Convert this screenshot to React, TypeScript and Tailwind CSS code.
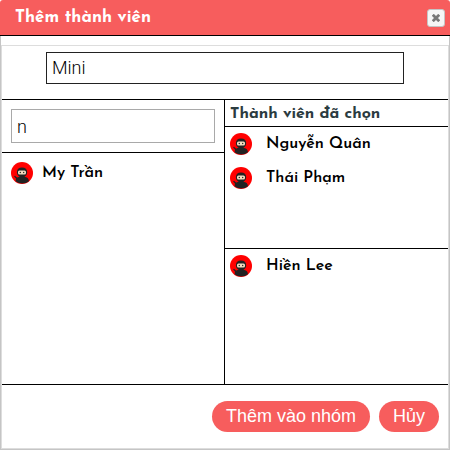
import { useState } from "react";

const nameFont = "font-['Josefin_Sans','Lato','Noto_Sans',sans-serif]";

function NinjaAvatar() {
  return (
    <svg viewBox="0 0 22 22" className="size-[22px] shrink-0" aria-hidden="true">
      <circle cx="11" cy="11" r="11" fill="#ff0000" />
      <path d="M3 14.500l1-.7 4 3.500-1 1.500z" fill="#222" />
      <path
        d="M11 5.500c3.400 0 5.200 2 5.200 4.700 0 2.200-1.200 3.800-2.900 4.600 3 .4 4.500 1.700 4.700 4.500A11 11 0 0 1 4.500 19.300c.2-2.800 1.500-4.100 4.300-4.500-1.700-.8-2.900-2.400-2.900-4.600 0-2.700 1.700-4.700 5.100-4.700z"
        fill="#222"
      />
      <rect x="7" y="8.500" width="8" height="4" rx="1.500" fill="#f3dcc0" />
      <circle cx="9.300" cy="10.500" r=".7" fill="#222" />
      <circle cx="12.700" cy="10.500" r=".7" fill="#222" />
    </svg>
  );
}

function Member({ name, gap }: { name: string; gap: string }) {
  return (
    <li className={`flex h-[34px] items-center ${gap}`}>
      <NinjaAvatar />
      <span>{name}</span>
    </li>
  );
}

export default function App() {
  const [group, setGroup] = useState("Mini");
  const [query, setQuery] = useState("n");

  return (
    <div className="bg-white pr-px">
      <div role="dialog" aria-labelledby="title" className="rounded-t-[3px] text-black">
        <header className="flex h-9 items-center justify-between rounded-t-[3px] border-b border-black bg-[#f75d5d] pr-[5px] pl-[15px]">
          <h1 id="title" className={`text-[17px] leading-6 font-bold text-white ${nameFont}`}>
            Thêm thành viên
          </h1>
          <button
            type="button"
            aria-label="Đóng"
            className="flex size-[18px] items-center justify-center rounded-[3px] border border-[#c5c5c5] bg-[#f6f6f6]"
          >
            <svg viewBox="0 0 8 8" className="size-2" aria-hidden="true">
              <path d="M.8 .8l6.400 6.400M7.200 .8L.8 7.200" stroke="#777" strokeWidth="2.800" />
            </svg>
          </button>
        </header>

        <div className="border-x border-b border-[#c5c5c5] pt-[9px]">
          <div className="border border-[#ddd]">
            <div className="px-11 pt-1.5 pb-[15px]">
              <input
                type="text"
                aria-label="Tên nhóm"
                value={group}
                onChange={(e) => setGroup(e.target.value)}
                className="block h-8 w-full border border-[#222] px-[5px] pb-0.5 font-['Roboto',sans-serif] text-lg leading-6 font-light text-black outline-none"
              />
            </div>

            <div className="grid h-[286px] grid-cols-2 border-y border-black">
              <section className="flex flex-col border-r border-black">
                <div className="border-b border-black p-[9px]">
                  <input
                    type="text"
                    aria-label="Tìm thành viên"
                    value={query}
                    onChange={(e) => setQuery(e.target.value)}
                    className="block h-[34px] w-full border border-[#a9a9a9] px-[5px] font-['Roboto',sans-serif] text-lg leading-6 font-light text-black outline-none"
                  />
                </div>
                <ul className={`px-[9px] pt-[3px] text-base font-semibold ${nameFont}`}>
                  <Member name="My Trần" gap="gap-[9px]" />
                </ul>
              </section>

              <section className={`flex flex-col text-base font-semibold ${nameFont}`}>
                <h2 className="h-[27px] border-b border-black px-[5px] leading-7 font-bold text-[#2b3b3f]">
                  Thành viên đã chọn
                </h2>
                <ul className="h-[122px] border-b border-black px-[5px]">
                  <Member name="Nguyễn Quân" gap="gap-3.5" />
                  <Member name="Thái Phạm" gap="gap-3.5" />
                </ul>
                <ul className="px-[5px]">
                  <Member name="Hiền Lee" gap="gap-3.5" />
                </ul>
              </section>
            </div>

            <footer className="flex justify-end gap-[9px] px-[9px] py-4 font-['Liberation_Sans',Arial,sans-serif] text-lg">
              <button type="button" className="h-[31px] rounded-full bg-[#f75d5d] px-3.5 leading-[31px] text-white">
                Thêm vào nhóm
              </button>
              <button type="button" className="h-[31px] rounded-full bg-[#f75d5d] px-3.5 leading-[31px] text-white">
                Hủy
              </button>
            </footer>
          </div>
        </div>
      </div>
    </div>
  );
}
